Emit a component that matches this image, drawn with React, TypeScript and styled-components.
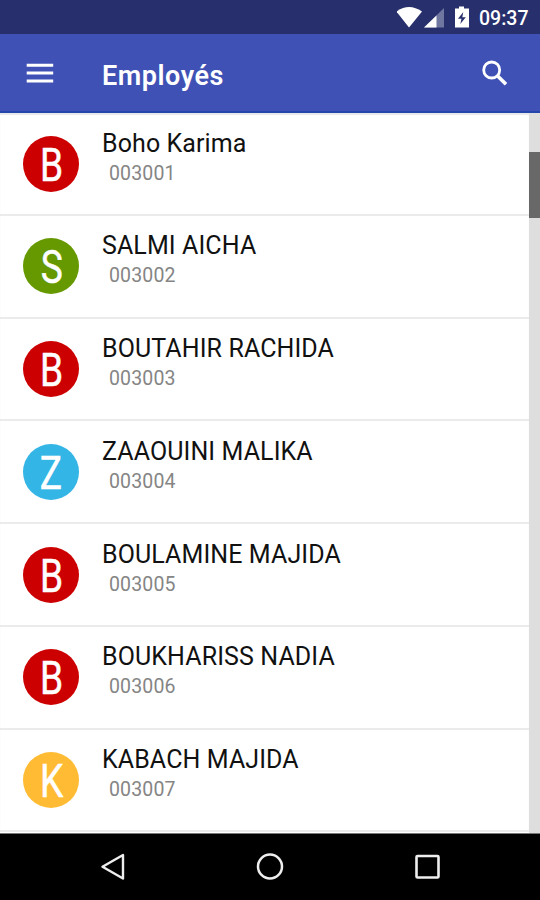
import React from "react";
import styled, { createGlobalStyle } from "styled-components";

const GlobalStyle = createGlobalStyle`
  * { box-sizing: border-box; }
  html, body { margin: 0; padding: 0; background: #fff; }
  body { font-family: Roboto, "Liberation Sans", sans-serif; overflow: hidden; }
  svg { display: block; flex: none; }
`;

const Screen = styled.div`
  width: 540px;
  height: 900px;
  display: flex;
  flex-direction: column;
  background: #fff;
  overflow: hidden;
`;

const StatusBar = styled.div`
  height: 34px;
  flex: none;
  display: flex;
  align-items: center;
  justify-content: flex-end;
  padding-right: 12px;
  background: #27306c;
`;

const Clock = styled.span`
  margin-left: 4px;
  width: 49px;
  white-space: nowrap;
  font-size: 19.5px;
  line-height: 34px;
  font-weight: 500;
  color: #fff;
  padding-top: 3px;
`;

const AppBar = styled.header`
  height: 79px;
  flex: none;
  display: flex;
  align-items: center;
  padding: 1px 31px 0 26px;
  background: #3f51b5;
  border-bottom: 2px solid #2346ad;
`;

const Title = styled.h1`
  flex: 1;
  margin: 6px 0 0 48px;
  font-size: 27px;
  line-height: 32px;
  font-weight: 600;
  letter-spacing: 0.55px;
  color: #fff;
`;

const Content = styled.main`
  flex: none;
  height: 721px;
  display: flex;
  overflow: hidden;
  border-bottom: 1px solid #777;
`;

const List = styled.ul`
  flex: 1;
  margin: 0;
  padding: 0;
  list-style: none;
  box-shadow: inset 0 2px 1px #e8e8e8;
`;

const Row = styled.li`
  height: 102.75px;
  display: flex;
  align-items: flex-start;
  padding: 22.5px 0 0 23px;
  border-bottom: 2px solid #ebebeb;
`;

const Avatar = styled.div<{ $color: string }>`
  width: 56px;
  height: 56px;
  flex: none;
  border-radius: 50%;
  display: flex;
  align-items: center;
  justify-content: center;
  background: ${(p) => p.$color};
`;

const Initial = styled.span`
  font-size: 47px;
  line-height: 56px;
  color: #fff;
  -webkit-text-stroke: 0.5px #fff;
  transform: scaleX(0.79);
  padding: 2px 0 0 1px;
`;

const Details = styled.div`
  margin: -8px 0 0 23px;
  white-space: nowrap;
`;

const Name = styled.div`
  font-size: 25px;
  line-height: 32px;
  letter-spacing: 0.1px;
  color: #111;
`;

const Code = styled.div`
  margin-left: 7px;
  font-size: 19.5px;
  line-height: 28px;
  letter-spacing: 0.15px;
  color: #858585;
`;

const ScrollTrack = styled.div`
  width: 11px;
  flex: none;
  padding-top: 39px;
  background: #dedede;
`;

const ScrollThumb = styled.div`
  height: 66px;
  background: #686868;
`;

const NavBar = styled.nav`
  flex: 1;
  display: flex;
  align-items: center;
  justify-content: space-between;
  padding: 0 99px 0 98px;
  background: #000;
`;

const employees = [
  { name: "Boho Karima", code: "003001", color: "#cc0000" },
  { name: "SALMI AICHA", code: "003002", color: "#669900" },
  { name: "BOUTAHIR RACHIDA", code: "003003", color: "#cc0000" },
  { name: "ZAAOUINI MALIKA", code: "003004", color: "#33b5e5" },
  { name: "BOULAMINE MAJIDA", code: "003005", color: "#cc0000" },
  { name: "BOUKHARISS NADIA", code: "003006", color: "#cc0000" },
  { name: "KABACH MAJIDA", code: "003007", color: "#ffbb33" },
];

const StatusIcons = () => (
  <svg width="78" height="34" viewBox="0 0 78 34" aria-hidden="true">
    <path d="M-.5 11.5Q12 2.5 25 11.5L12 27.5Z" fill="#fff" />
    <path d="M47 8V27.5H27Z" fill="#6f76a0" />
    <path d="M39.5 15.5V27.5H27Z" fill="#fff" />
    <path d="M62 6.5h5v2h5v19H58V8.5h4Z" fill="#fff" />
    <path d="M66.3 12L61 18.7H64.5L63.3 24L68.8 17.2H65.3Z" fill="#27306c" />
  </svg>
);

const MenuIcon = () => (
  <svg width="28" height="22" viewBox="0 0 28 22" aria-hidden="true">
    <path d="M.7 3.2H27.2M.7 11H27.2M.7 19H27.2" stroke="#fff" strokeWidth="3" />
  </svg>
);

const SearchIcon = () => (
  <svg width="28" height="28" viewBox="0 0 28 28" aria-hidden="true">
    <circle cx="10.7" cy="11" r="8" fill="none" stroke="#fff" strokeWidth="2.8" />
    <path d="M16.4 16.7L25 25.2" stroke="#fff" strokeWidth="3.6" />
  </svg>
);

export default function App() {
  return (
    <>
      <GlobalStyle />
      <Screen>
        <StatusBar>
          <StatusIcons />
          <Clock>09:37</Clock>
        </StatusBar>
        <AppBar>
          <MenuIcon />
          <Title>Employés</Title>
          <SearchIcon />
        </AppBar>
        <Content>
          <List>
            {employees.map((e) => (
              <Row key={e.code}>
                <Avatar $color={e.color}>
                  <Initial>{e.name[0]}</Initial>
                </Avatar>
                <Details>
                  <Name>{e.name}</Name>
                  <Code>{e.code}</Code>
                </Details>
              </Row>
            ))}
          </List>
          <ScrollTrack>
            <ScrollThumb />
          </ScrollTrack>
        </Content>
        <NavBar>
          <svg width="28" height="28" viewBox="0 0 28 28" aria-hidden="true">
            <path d="M25 2V25.5L4.5 13.7Z" fill="none" stroke="#eee" strokeWidth="2.4" strokeLinejoin="round" />
          </svg>
          <svg width="28" height="28" viewBox="0 0 28 28" aria-hidden="true">
            <circle cx="14" cy="13.5" r="12" fill="none" stroke="#eee" strokeWidth="2.5" />
          </svg>
          <svg width="28" height="28" viewBox="0 0 28 28" aria-hidden="true">
            <rect x="3.5" y="3" width="22" height="21.5" rx="1" fill="none" stroke="#eee" strokeWidth="2.6" />
          </svg>
        </NavBar>
      </Screen>
    </>
  );
}
